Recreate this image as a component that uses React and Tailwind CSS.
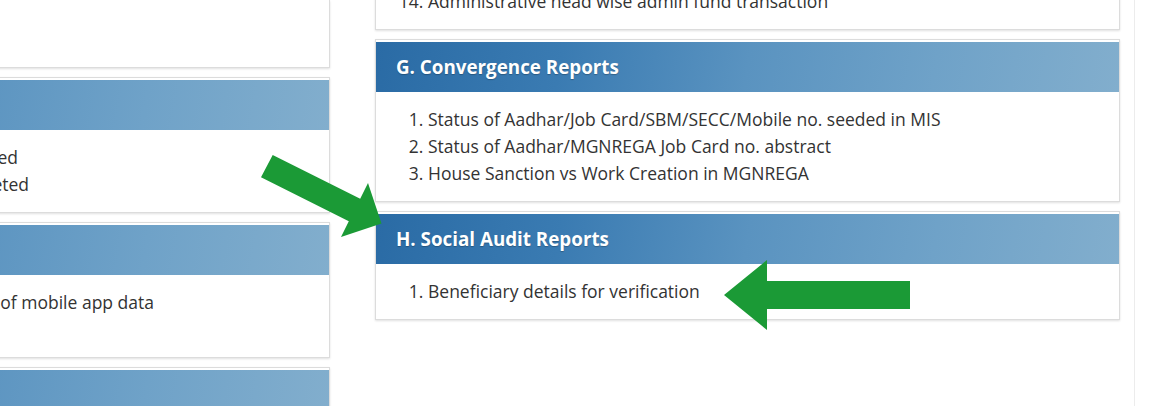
import React from "react";

const headerBg =
  "bg-[linear-gradient(100deg,#2a6ba5_0%,#3a7bb2_25%,#5a93c0_50%,#6fa2c8_75%,#82aecd_100%)]";

function Header({ children }) {
  return (
    <div className={`h-[50px] ${headerBg} flex items-center pl-[20px] text-white font-bold text-[18.8px] [text-shadow:0_1px_1px_rgba(0,0,0,0.25)]`}>
      {children}
    </div>
  );
}

function Panel({ title, children, className = "" }) {
  return (
    <div className={`border border-[#dcdcdc] pt-[2px] bg-white shadow-[0_1px_2px_rgba(0,0,0,0.12)] ${className}`}>
      <Header>{title}</Header>
      {children}
    </div>
  );
}

function List({ items, start = 1 }) {
  return (
    <ol start={start} className="list-decimal pl-[52px] py-[14px] text-[17.5px] leading-[27px] text-[#333]">
      {items.map((t) => (
        <li key={t} className="whitespace-nowrap">{t}</li>
      ))}
    </ol>
  );
}

function RightLines({ lines }) {
  return (
    <div className="py-[14px] text-[17.5px] leading-[27px] text-[#333]">
      {lines.map(([t, pr], i) => (
        <div key={i} className="whitespace-nowrap text-right" style={{ paddingRight: pr }}>
          {t}
        </div>
      ))}
    </div>
  );
}

export default function App() {
  return (
    <div className="relative w-[1149px] h-[406px] overflow-hidden bg-white font-['Open_Sans',sans-serif]">
      <div className="flex">
        {/* left column */}
        <div className="w-[745px] ml-[-415px] shrink-0 flex flex-col gap-[9px]">
          <div className="h-[68px] border-x border-b border-[#dcdcdc] shadow-[0_1px_2px_rgba(0,0,0,0.12)]" />
          <Panel title="E. Physical Progress Reports">
            <RightLines
              lines={[
                ["1. Number of houses where inspection completed", "311px"],
                ["2. Number of houses where inspection not completed", "300px"],
              ]}
            />
          </Panel>
          <Panel title="F. Mobile App Reports">
            <RightLines
              lines={[
                ["1. Verification status\u00a0\u00a0 of mobile app data", "175px"],
                ["2. Mobile app usage", "400px"],
              ]}
            />
          </Panel>
          <Panel title="G. Other Reports">
            <div className="h-[60px]" />
          </Panel>
        </div>

        {/* right column */}
        <div className="w-[745px] ml-[45px] shrink-0 mt-[-12px] flex flex-col gap-[9px]">
          <div className="border-x border-b border-[#dcdcdc] bg-white shadow-[0_1px_2px_rgba(0,0,0,0.12)]">
            <ol start={14} className="list-decimal pl-[52px] pb-[14px] text-[17.5px] leading-[27px] text-[#333]">
              <li className="whitespace-nowrap">Administrative head wise admin fund transaction</li>
            </ol>
          </div>
          <Panel title="G. Convergence Reports">
            <List
              items={[
                "Status of Aadhar/Job Card/SBM/SECC/Mobile no. seeded in MIS",
                "Status of Aadhar/MGNREGA Job Card no. abstract",
                "House Sanction vs Work Creation in MGNREGA",
              ]}
            />
          </Panel>
          <Panel title="H. Social Audit Reports">
            <List items={["Beneficiary details for verification"]} />
          </Panel>
        </div>

        <div className="ml-[14px] flex-1 h-[406px] border-l border-[#ececec]" />
      </div>

      {/* annotation arrows */}
      <svg className="absolute inset-0 pointer-events-none" width="1149" height="406" viewBox="0 0 1149 406">
        <polygon
          fill="#1b9a36"
          points="272.7,155 360.2,198.7 368,183 381.5,223.5 341,237 348.8,221.3 261,177.3"
        />
        <polygon
          fill="#1b9a36"
          points="724,295 767,260 767,281 910,281 910,309 767,309 767,330"
        />
      </svg>
    </div>
  );
}
